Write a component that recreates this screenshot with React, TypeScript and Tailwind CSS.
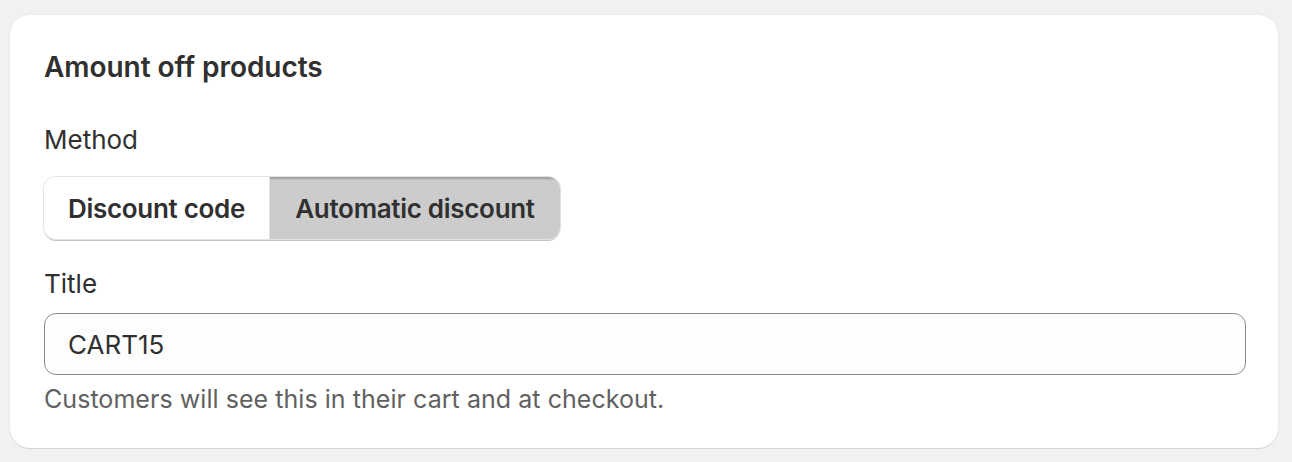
import React from "react";

export default function App() {
  return (
    <div
      className="w-[1292px] h-[462px] bg-[#f1f1f1] pt-[15px] pl-[10px]"
      style={{ fontFamily: "Inter, 'Noto Sans', sans-serif" }}
    >
      <div className="w-[1268px] h-[433px] bg-white rounded-[20px] shadow-[0_1px_0_0_#d4d4d4,0_0_0_1px_#ebebeb] px-[34px] pt-[36px] flex flex-col text-[#303030]">
        <h2 className="text-[28px] leading-[32px] font-semibold tracking-[-0.05px]">
          Amount off products
        </h2>
        <div className="mt-[41px] text-[26px] leading-[32px]">Method</div>
        <div className="mt-[21px] flex w-[516px] h-[62px] rounded-[12px] shadow-[0_0_0_1px_#e3e3e3,0_2px_0_0_#c4c4c4] overflow-hidden">
          <button className="w-[226px] h-full bg-white text-[26px] font-semibold text-[#303030] border-r border-[#e3e3e3] tracking-[-0.3px]">
            Discount code
          </button>
          <button className="flex-1 h-full bg-[#cccccc] text-[26px] font-semibold text-[#303030] shadow-[inset_0_3px_2px_-1px_#9e9e9e] tracking-[-0.3px]">
            Automatic discount
          </button>
        </div>
        <div className="mt-[29px] text-[26px] leading-[32px]">Title</div>
        <div className="mt-[13px] w-[1202px] h-[62px] rounded-[12px] border border-[#8a8a8a] bg-[#fdfdfd] flex items-center px-[23px] text-[26px]">
          CART15
        </div>
        <div className="mt-[10px] text-[25px] leading-[28px] text-[#616161] tracking-[0.05px]">
          Customers will see this in their cart and at checkout.
        </div>
      </div>
    </div>
  );
}
